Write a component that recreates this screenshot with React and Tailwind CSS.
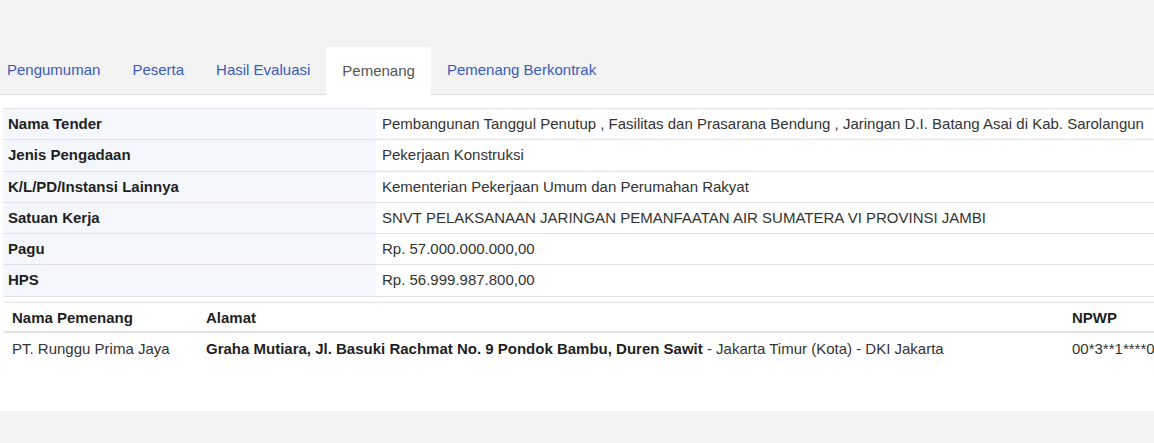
const tabs = ["Pengumuman", "Peserta", "Hasil Evaluasi", "Pemenang", "Pemenang Berkontrak"]

const info = [
  ["Nama Tender", "Pembangunan Tanggul Penutup , Fasilitas dan Prasarana Bendung , Jaringan D.I. Batang Asai di Kab. Sarolangun"],
  ["Jenis Pengadaan", "Pekerjaan Konstruksi"],
  ["K/L/PD/Instansi Lainnya", "Kementerian Pekerjaan Umum dan Perumahan Rakyat"],
  ["Satuan Kerja", "SNVT PELAKSANAAN JARINGAN PEMANFAATAN AIR SUMATERA VI PROVINSI JAMBI"],
  ["Pagu", "Rp. 57.000.000.000,00"],
  ["HPS", "Rp. 56.999.987.800,00"],
]

export default function App() {
  return (
    <div className="w-[1154px] h-[443px] overflow-hidden bg-[#f3f3f4] text-[15px] text-[#333] font-['Liberation_Sans',Arial,sans-serif]">
      <div className="h-[47px]" />
      <div className="flex h-[48px] border-b border-[#dddddd] ml-[-9px]">
        {tabs.map(t => (
          <div
            key={t}
            className={
              t === "Pemenang"
                ? "px-4 h-[48px] flex items-center bg-white text-[#555] rounded-t-[3px] mb-[-1px]"
                : "px-4 h-[47px] flex items-center text-[#3a5bb8]"
            }
          >
            {t}
          </div>
        ))}
      </div>
      <div className="bg-white h-[316px] pt-[13px]">
        <table className="ml-[3px] w-[1200px] border-collapse">
          <tbody>
            {info.map(([label, value]) => (
              <tr key={label} className="border-t border-b border-[#e2e2e2]">
                <td className="w-[373px] bg-[#f4f8fc] px-[5px] py-[5px] leading-[20.3px] font-bold text-[#1f1f1f]">{label}</td>
                <td className="px-[6px] py-[5px] leading-[20.3px]">{value}</td>
              </tr>
            ))}
          </tbody>
        </table>
        <table className="ml-[4px] mt-[5px] w-[1250px] border-collapse">
          <thead>
            <tr className="border-t border-[#e2e2e2] border-b-2 border-b-[#e2e2e2]">
              <th className="w-[194px] text-left font-bold text-[#1f1f1f] px-2 pt-[5px] pb-[3px] leading-[20px]">Nama Pemenang</th>
              <th className="w-[866px] text-left font-bold text-[#1f1f1f] px-2 pt-[5px] pb-[3px] leading-[20px]">Alamat</th>
              <th className="text-left font-bold text-[#1f1f1f] px-2 pt-[5px] pb-[3px] leading-[20px]">NPWP</th>
            </tr>
          </thead>
          <tbody>
            <tr>
              <td className="px-2 pt-[6px] pb-[5px] leading-[20px]">PT. Runggu Prima Jaya</td>
              <td className="px-2 pt-[6px] pb-[5px] leading-[20px]">
                <span className="font-bold text-[#1f1f1f]">Graha Mutiara, Jl. Basuki Rachmat No. 9 Pondok Bambu, Duren Sawit</span> - Jakarta Timur (Kota) - DKI Jakarta
              </td>
              <td className="px-2 pt-[6px] pb-[5px] leading-[20px]">00*3**1****0</td>
            </tr>
          </tbody>
        </table>
      </div>
    </div>
  )
}
